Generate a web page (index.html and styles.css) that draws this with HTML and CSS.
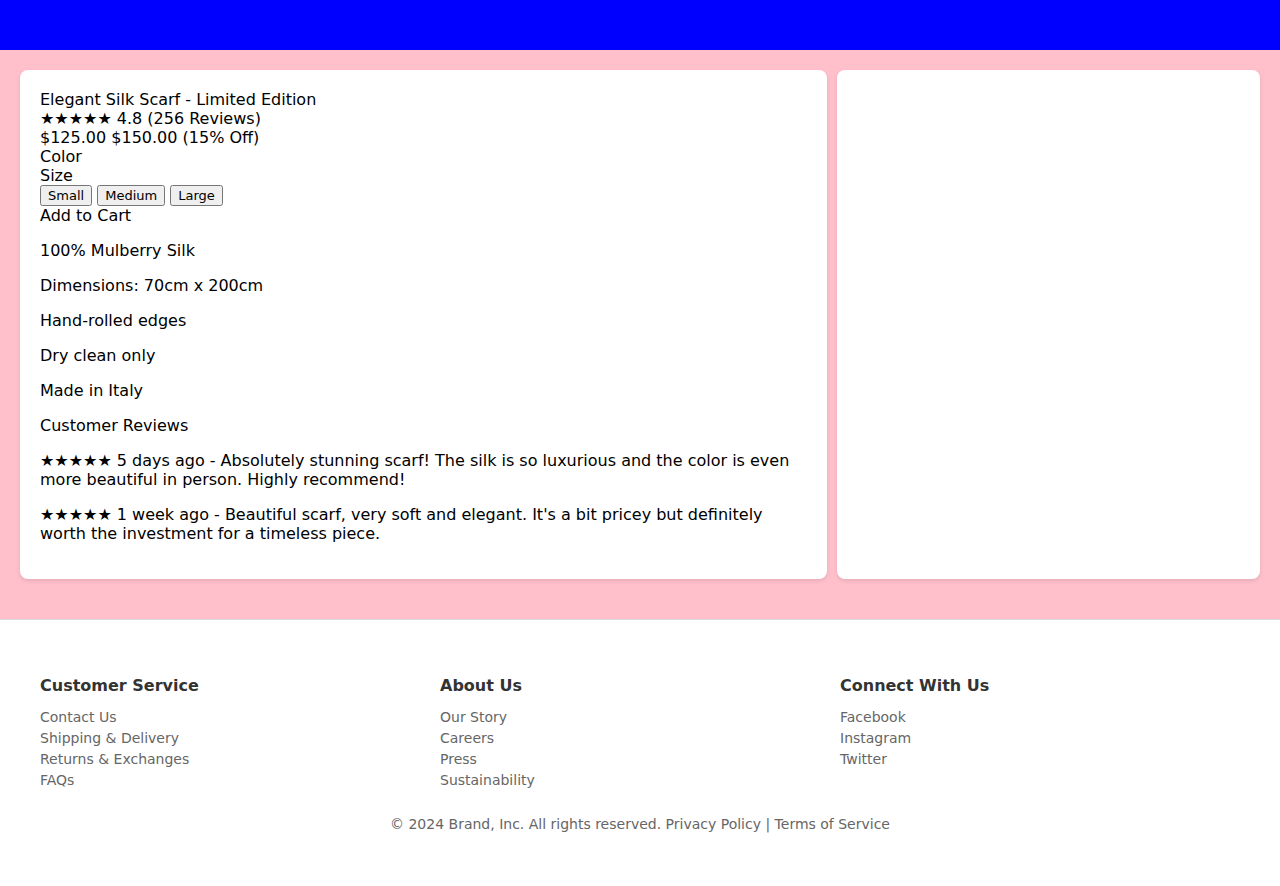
FILE: index.html
```html
<!DOCTYPE html>
<html lang="en">
<head>
<meta charset="utf-8">
<title>Elegant Silk Scarf - Limited Edition</title>
<link rel="stylesheet" href="styles.css">
</head>
<body>
<header class="topbar"></header>
<main class="main">
  <div class="product">
    <section class="card card-details">
      <div class="title">Elegant Silk Scarf - Limited Edition</div>
      <div class="rating">★★★★★ 4.8 (256 Reviews)</div>
      <div class="price"><span>$125.00</span> <span>$150.00</span> <span>(15% Off)</span></div>
      <div class="label">Color</div>
      <div class="label">Size</div>
      <div class="sizes"><button class="size-btn">Small</button> <button class="size-btn">Medium</button> <button class="size-btn">Large</button></div>
      <div class="cart">Add to Cart</div>
      <p class="para">100% Mulberry Silk</p>
      <p class="para">Dimensions: 70cm x 200cm</p>
      <p class="para">Hand-rolled edges</p>
      <p class="para">Dry clean only</p>
      <p class="para">Made in Italy</p>
      <p class="para">Customer Reviews</p>
      <p class="para">★★★★★ 5 days ago - Absolutely stunning scarf! The silk is so luxurious and the color is even more beautiful in person. Highly recommend!</p>
      <p class="para">★★★★★ 1 week ago - Beautiful scarf, very soft and elegant. It's a bit pricey but definitely worth the investment for a timeless piece.</p>
    </section>
    <section class="card card-side"></section>
  </div>
</main>
<footer class="footer">
  <div class="footer-cols">
    <div class="footer-col">
      <h3 class="footer-heading">Customer Service</h3>
      <ul class="footer-list">
        <li>Contact Us</li>
        <li>Shipping &amp; Delivery</li>
        <li>Returns &amp; Exchanges</li>
        <li>FAQs</li>
      </ul>
    </div>
    <div class="footer-col">
      <h3 class="footer-heading">About Us</h3>
      <ul class="footer-list">
        <li>Our Story</li>
        <li>Careers</li>
        <li>Press</li>
        <li>Sustainability</li>
      </ul>
    </div>
    <div class="footer-col">
      <h3 class="footer-heading">Connect With Us</h3>
      <ul class="footer-list">
        <li>Facebook</li>
        <li>Instagram</li>
        <li>Twitter</li>
      </ul>
    </div>
  </div>
  <div class="copyright">© 2024 Brand, Inc. All rights reserved. Privacy Policy | Terms of Service</div>
</footer>
</body>
</html>
```

FILE: styles.css
```css
body {
  margin: 0;
  font-family: "DejaVu Sans", sans-serif;
  font-size: 16px;
  color: #000;
  background: #fff;
}

.topbar {
  height: 50px;
  background: #0000ff;
}

.main {
  background: #ffc0cb;
  padding: 20px 20px 40px;
}

.product {
  display: flex;
  gap: 10px;
}

.card {
  background: #fff;
  border-radius: 8px;
  padding: 20px;
  box-shadow: 0 2px 4px rgba(0, 0, 0, 0.1);
}

.card-details {
  flex: 2;
}

.card-side {
  flex: 1;
}

.para {
  margin: 16px 0;
}

.size-btn {
  font-family: "DejaVu Sans", sans-serif;
  font-size: 13px;
  margin: 0;
}

.footer {
  border-top: 1px solid #ddd;
  padding: 40px;
}

.footer-cols {
  display: grid;
  grid-template-columns: repeat(3, 1fr);
}

.footer-heading {
  font-size: 16px;
  color: #333;
  margin: 16px 0 12px;
}

.footer-list {
  list-style: none;
  margin: 0;
  padding: 0;
  font-size: 14px;
  line-height: 21px;
  color: #666;
}

.copyright {
  margin-top: 23px;
  text-align: center;
  font-size: 14px;
  line-height: 21px;
  color: #666;
}
```
